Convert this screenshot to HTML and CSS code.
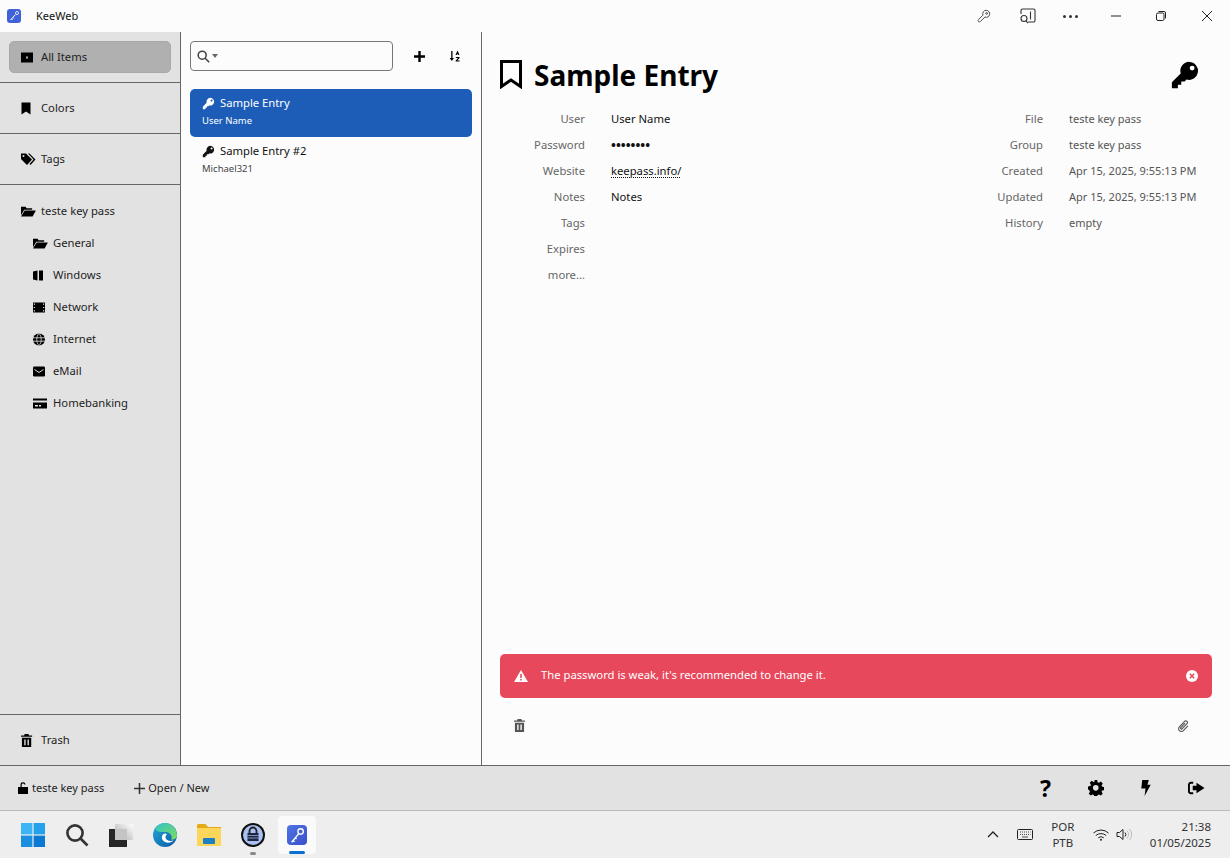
FILE: index.html
```html
<!DOCTYPE html>
<html lang="en">
<head>
    <meta charset="UTF-8">
    <meta name="viewport" content="width=device-width, initial-scale=1.0">
    <title>KeeWeb</title>
    <link rel="stylesheet" href="styles.css">
</head>
<body>
    <svg class="defs" aria-hidden="true">
        <symbol id="i-key" viewBox="0 0 16 16"><path fill-rule="evenodd" d="M10.3 1a4.8 4.8 0 0 0-4.6 6.2L1 11.900V15h3.200v-1.800H6v-1.800h1.800l1-1a4.800 4.800 0 1 0 1.500-9.400zM11.800 3a1.300 1.300 0 1 1 0 2.600 1.300 1.300 0 0 1 0-2.600z"/></symbol>
        <symbol id="i-folder" viewBox="0 0 16 14" preserveAspectRatio="xMinYMid meet"><path d="M0 2h5l1 1.500h6V5H3.500L0 11zM4 6h12l-3.500 6.500H0z"/></symbol>
        <symbol id="i-trash" viewBox="0 0 12 14" preserveAspectRatio="xMinYMid meet"><path fill-rule="evenodd" d="M4 0h4l.7 1.500H12V3H0V1.500h3.300zM1 4h10v10H1zm2.500 2v6h1.500V6zm3.500 0v6h1.500V6z"/></symbol>
        <linearGradient id="g-task" x1="1" y1="0" x2="0" y2="1"><stop offset="0" stop-color="#ffffff"/><stop offset="1" stop-color="#a8a8a8"/></linearGradient>
        <linearGradient id="g-edge" x1="0" y1="0" x2="1" y2="1"><stop offset="0" stop-color="#1fa8d8"/><stop offset="1" stop-color="#0c59a4"/></linearGradient>
        <linearGradient id="g-edge2" x1="0" y1="0" x2="1" y2="1"><stop offset="0" stop-color="#2ec4c8"/><stop offset="1" stop-color="#7fdc5c"/></linearGradient>
    </svg>

    <div class="titlebar">
        <div class="app-icon"><svg width="12" height="12" viewBox="0 0 12 12"><path d="M9 1.500a1.500 1.500 0 1 0 .1 0zM7.500 4.500 2.500 10M3.500 9l1 1M5 7.500l1 1" fill="none" stroke="#fff" stroke-width="1"/></svg></div>
        <span class="app-name">KeeWeb</span>
        <div class="win-tools">
            <svg class="w-icon w-key" viewBox="0 0 16 16" fill="none" stroke="#333" stroke-width="1"><path d="M10.500 1.500a4 4 0 0 0-3.700 5.500L1.700 12.100a1.500 1.500 0 0 0 2.200 2.200L9 9.200a4 4 0 1 0 1.500-7.700z"/><circle cx="11" cy="5" r="1"/></svg>
            <svg class="w-icon w-find" viewBox="0 0 16 16" fill="none" stroke="#333" stroke-width="1.100"><path d="M1 6V2.500A1.500 1.500 0 0 1 2.500 1h11A1.500 1.500 0 0 1 15 2.500v10a1.500 1.500 0 0 1-1.500 1.500H8M10.500 3.500v8"/><circle cx="4" cy="10.500" r="3"/><path d="m6 13 2 2.200"/></svg>
            <div class="w-dots"><i></i><i></i><i></i></div>
            <svg class="w-icon w-min" viewBox="0 0 10 10" stroke="#222"><path d="M0 5h10"/></svg>
            <svg class="w-icon w-max" viewBox="0 0 10 10" fill="none" stroke="#222"><rect x=".5" y="2" width="7.500" height="7.500" rx="1.500"/><path d="M2.500 .5H8a1.500 1.500 0 0 1 1.500 1.500v5.500"/></svg>
            <svg class="w-icon w-close" viewBox="0 0 10 10" stroke="#222"><path d="m0 0 10 10M10 0 0 10"/></svg>
        </div>
    </div>

    <div class="app">
        <div class="menu">
            <div class="menu-section">
                <div class="menu-item active">
                    <svg class="menu-icon" viewBox="0 -1.500 15 13"><path fill-rule="evenodd" d="M0 0h12v10H0zm5 4v2h2V4z"/></svg>
                    <span>All Items</span>
                </div>
            </div>
            <div class="menu-section">
                <div class="menu-item">
                    <svg class="menu-icon" viewBox="1 -.5 15 13"><path d="M1.500 0h9v12L6 9l-4.500 3z"/></svg>
                    <span>Colors</span>
                </div>
            </div>
            <div class="menu-section">
                <div class="menu-item">
                    <svg class="menu-icon" viewBox="0 -.5 15 13"><path fill-rule="evenodd" d="M0 0h5l6 6-5 5.500L0 5.500zm2.500 1.500a1 1 0 1 0 0 2 1 1 0 0 0 0-2z"/><path d="M7 0h1.500l6 6-5 5.500-1-1 4-4.500z"/></svg>
                    <span>Tags</span>
                </div>
            </div>
            <div class="menu-groups">
                <div class="menu-item">
                    <svg class="menu-icon"><use href="#i-folder"/></svg>
                    <span>teste key pass</span>
                </div>
                <div class="menu-item sub">
                    <svg class="menu-icon"><use href="#i-folder"/></svg>
                    <span>General</span>
                </div>
                <div class="menu-item sub">
                    <svg class="menu-icon" viewBox="0 -1.500 15 13"><path d="M0 1l4.500-1v10L0 9zM6 0l4 0v10H6z"/></svg>
                    <span>Windows</span>
                </div>
                <div class="menu-item sub">
                    <svg class="menu-icon" viewBox="0 -1.500 15 13"><path fill-rule="evenodd" d="M0 0h12v10H0zm.800 1v1.200H2V1zm9.200 0v1.200h1.200V1zM.800 4.400v1.200H2V4.400zm9.200 0v1.200h1.200V4.400zM.800 7.800V9H2V7.800zm9.200 0V9h1.200V7.800z"/></svg>
                    <span>Network</span>
                </div>
                <div class="menu-item sub">
                    <svg class="menu-icon" viewBox="0 -.5 15 13"><circle cx="6" cy="6" r="6"/><path d="M0 4.300h12M0 7.700h12M6 0c-3 3-3 9 0 12M6 0c3 3 3 9 0 12" fill="none" stroke="#e2e2e2" stroke-width=".8"/></svg>
                    <span>Internet</span>
                </div>
                <div class="menu-item sub">
                    <svg class="menu-icon" viewBox="0 -1.500 15 13"><rect width="12" height="10" rx="1.200"/><path d="m1.500 3 4.500 3 4.500-3" fill="none" stroke="#e2e2e2"/></svg>
                    <span>eMail</span>
                </div>
                <div class="menu-item sub">
                    <svg class="menu-icon" viewBox="0 -1.500 15 13"><path fill-rule="evenodd" d="M0 0h14v2H0zM0 4h14v6H0zm2 2.500v1.500h3V6.500zm4 0v1.500h2V6.500z"/></svg>
                    <span>Homebanking</span>
                </div>
            </div>
            <div class="menu-section trash">
                <div class="menu-item">
                    <svg class="menu-icon"><use href="#i-trash"/></svg>
                    <span>Trash</span>
                </div>
            </div>
        </div>

        <div class="list">
            <div class="list-head">
                <div class="search">
                    <svg class="search-icon" viewBox="0 0 13 13" fill="none" stroke="#444" stroke-width="1.600"><circle cx="5.200" cy="5.200" r="4"/><path d="m8.200 8.200 4 4"/></svg>
                    <span class="caret"></span>
                </div>
                <svg class="head-btn plus" viewBox="0 0 11 11"><path d="M4.300 0h2.400v4.300H11v2.400H6.700V11H4.300V6.700H0V4.300h4.300z"/></svg>
                <svg class="head-btn sort" viewBox="0 0 12 12"><path d="M2.200 1h1.300v7H5L2.800 11 .6 8h1.600zM8.500 .5l2 4.500H9.300L9 4.200H8L7.700 5H6.500zM6.800 7h3.800v1L8.300 10.400h2.300v1.100H6.700v-1L9 8H6.800z"/></svg>
            </div>
            <div class="entry selected">
                <div class="entry-title"><svg class="entry-icon"><use href="#i-key"/></svg><span>Sample Entry</span></div>
                <div class="entry-sub">User Name</div>
            </div>
            <div class="entry">
                <div class="entry-title"><svg class="entry-icon"><use href="#i-key"/></svg><span>Sample Entry #2</span></div>
                <div class="entry-sub">Michael321</div>
            </div>
        </div>

        <div class="details">
            <div class="details-head">
                <svg class="bookmark" viewBox="0 0 22 29" fill="none" stroke="#000" stroke-width="3"><path d="M1.500 1.500h19v25L11 20l-9.500 6.500z"/></svg>
                <h1>Sample Entry</h1>
                <svg class="big-key"><use href="#i-key"/></svg>
            </div>
            <div class="fields">
                <div class="field-col">
                    <div class="label">User</div><div class="value">User Name</div>
                    <div class="label">Password</div><div class="value dots">&bull;&bull;&bull;&bull;&bull;&bull;&bull;&bull;</div>
                    <div class="label">Website</div><div class="value"><span class="link">keepass.info/</span></div>
                    <div class="label">Notes</div><div class="value">Notes</div>
                    <div class="label">Tags</div><div class="value"></div>
                    <div class="label">Expires</div><div class="value"></div>
                    <div class="label">more...</div><div class="value"></div>
                </div>
                <div class="field-col aside">
                    <div class="label">File</div><div class="value muted">teste key pass</div>
                    <div class="label">Group</div><div class="value muted">teste key pass</div>
                    <div class="label">Created</div><div class="value muted">Apr 15, 2025, 9:55:13 PM</div>
                    <div class="label">Updated</div><div class="value muted">Apr 15, 2025, 9:55:13 PM</div>
                    <div class="label">History</div><div class="value muted">empty</div>
                </div>
            </div>
            <div class="alert">
                <svg class="alert-icon" viewBox="0 0 14 12"><path fill-rule="evenodd" d="M7 0l7 12H0zM6.200 4v4h1.600V4zm0 5v1.500h1.600V9z"/></svg>
                <span class="alert-text">The password is weak, it's recommended to change it.</span>
                <svg class="alert-close" viewBox="0 0 12 12"><circle cx="6" cy="6" r="6" fill="#fff"/><path d="m3.800 3.800 4.400 4.400M8.200 3.800 3.800 8.200" stroke="#e8485c" stroke-width="1.500"/></svg>
            </div>
            <div class="details-foot">
                <svg class="foot-icon"><use href="#i-trash"/></svg>
                <svg class="foot-icon clip" viewBox="0 0 12 14" fill="none" stroke="#555" stroke-width="1.200"><path d="M3.500 11.500 9.800 5a1.800 1.800 0 0 0-2.600-2.500L1.500 8.400a3 3 0 0 0 4.300 4.200l5-5.200M7.700 4.300 3 9.200a.8.800 0 0 0 1.200 1.200"/></svg>
            </div>
        </div>
    </div>

    <div class="footer">
        <div class="foot-item">
            <svg class="lock" viewBox="0 0 10 12"><path d="M2.500 5V3a2.500 2.500 0 0 1 5-.5H6.300A1.300 1.300 0 0 0 3.700 3v2H10v7H0V5z"/></svg>
            <span>teste key pass</span>
        </div>
        <div class="foot-item open">
            <svg class="small-plus" viewBox="0 0 10 10"><path d="M4.300 0h1.400v4.300H10v1.400H5.700V10H4.300V5.700H0V4.300h4.300z"/></svg>
            <span>Open / New</span>
        </div>
        <div class="foot-actions">
            <span class="help">?</span>
            <svg class="foot-btn" viewBox="0 0 16 16"><path fill-rule="evenodd" d="m6.500 0h3l.4 2.200 1.400.6 1.900-1.200 2 2.100-1.200 1.900.6 1.400 2.400.4v3l-2.400.4-.6 1.400 1.200 1.900-2 2-1.900-1.200-1.400.6-.4 2.300h-3l-.4-2.300-1.400-.6-1.900 1.200-2-2 1.200-1.900-.6-1.400L0 9.600v-3l2.400-.4.600-1.400-1.200-1.900 2-2.100L5.700 2l1.400-.6zM8 5.200a2.900 2.900 0 1 0 0 5.800 2.900 2.900 0 0 0 0-5.800z" transform="scale(.97)"/></svg>
            <svg class="foot-btn" viewBox="0 0 12 17"><path d="M2 0h7L7.500 5H11L4.500 17l1-8H1z"/></svg>
            <svg class="foot-btn wide" viewBox="0 0 18 14"><path d="M9 1.500 17.500 7 9 12.500V9.500H5v-5h4z"/><path d="M5.500 1.500H3A2 2 0 0 0 1 3.500v7a2 2 0 0 0 2 2h2.500" fill="none" stroke="#000" stroke-width="2"/></svg>
        </div>
    </div>

    <div class="taskbar">
        <div class="task-icons">
            <div class="task"><svg viewBox="0 0 24 24" width="24" height="24"><rect width="11.400" height="11.400" fill="#3db5f5"/><rect x="12.600" width="11.400" height="11.400" fill="#25a0ea"/><rect y="12.600" width="11.400" height="11.400" fill="#1a8fe0"/><rect x="12.600" y="12.600" width="11.400" height="11.400" fill="#0b78d4"/></svg></div>
            <div class="task"><svg viewBox="0 0 24 24" width="24" height="24" fill="none" stroke="#333" stroke-width="2.600"><circle cx="10" cy="10" r="7.600"/><path d="m15.500 15.500 7 7"/></svg></div>
            <div class="task"><svg viewBox="0 0 24 24" width="24" height="24"><rect x="6" y="1" width="18" height="16" fill="url(#g-task)"/><rect y="6" width="18" height="18" fill="#262626"/><rect x="6" y="6" width="12" height="11" fill="#c4c4c4"/></svg></div>
            <div class="task"><svg viewBox="0 0 24 24" width="24" height="24"><circle cx="12" cy="12" r="12" fill="url(#g-edge)"/><path d="M2 5.500A12 12 0 0 1 24 12c0 3.500-3 5-6 4.500 2-3-.5-7.500-5.500-7.500-4 0-8.500.5-10.500-3.500z" fill="url(#g-edge2)"/><path d="M12.500 10.500c-4.500 0-5 6.500-.5 8.500 3 1.300 6.500.5 8.500-1.500-4 1.200-7.500-.2-8-2.800-.2-1.500.5-3 1.500-3.500-.5-.5-1-.7-1.500-.7z" fill="#fff"/></svg></div>
            <div class="task"><svg viewBox="0 0 24 22" width="24" height="22"><path d="M0 1.500A1.500 1.500 0 0 1 1.500 0h7L11 3h13v19H0z" fill="#e6a917"/><rect y="4" width="24" height="18" fill="#fcd55b"/><rect x="6" y="14" width="12" height="6" rx="1" fill="#1b7fc4"/></svg></div>
            <div class="task running"><svg viewBox="0 0 24 24" width="24" height="24"><circle cx="12" cy="12" r="11" fill="#a9c0f0" stroke="#111" stroke-width="2"/><path d="M8.500 10V8a3.500 3.500 0 0 1 7 0v2" fill="none" stroke="#222" stroke-width="1.800"/><rect x="6.500" y="10" width="11" height="8" fill="#1c2640"/><path d="M6.500 12.500h11M6.500 15h11" stroke="#a9c0f0" stroke-width=".7"/></svg></div>
            <div class="task current"><div class="kw-icon"><svg viewBox="0 0 20 20" width="18" height="18" fill="none" stroke="#fff" stroke-width="1.500"><circle cx="14" cy="6" r="3"/><path d="M12 8.500 4 18M5.500 16l1.800 1.500M8 13l1.500 1.300"/></svg></div></div>
        </div>
        <div class="tray">
            <svg class="chevron" viewBox="0 0 12 7" fill="none" stroke="#222" stroke-width="1.300"><path d="m1 6 5-5 5 5"/></svg>
            <svg class="keyboard" viewBox="0 0 16 11" fill="none" stroke="#222"><rect x=".5" y=".5" width="15" height="10" rx="1"/><path d="M3 3h1M5 3h1M7 3h1M9 3h1M11 3h1M13 3h.5M3 5.500h1M5 5.500h1M7 5.500h1M9 5.500h1M11 5.500h1M13 5.500h.5M5 8h6" stroke-width=".8"/></svg>
            <div class="lang"><span>POR</span><span>PTB</span></div>
            <svg class="wifi" viewBox="0 0 16 12" fill="none" stroke="#222"><path d="M.5 4a11 11 0 0 1 15 0M2.800 6.500a8 8 0 0 1 10.400 0M5.200 8.800a4.500 4.500 0 0 1 5.600 0"/><circle cx="8" cy="10.800" r="1" fill="#222" stroke="none"/></svg>
            <svg class="speaker" viewBox="0 0 17 13" fill="none" stroke="#222"><path d="M1 4.500h2.500L7 1.500v10l-3.500-3H1zM9 4.500a3 3 0 0 1 0 4"/><path d="M11 2.500a6 6 0 0 1 0 8M13.500 1a8 8 0 0 1 0 11" stroke="#bbb"/></svg>
            <div class="clock"><span>21:38</span><span>01/05/2025</span></div>
        </div>
    </div>
</body>
</html>
```

FILE: styles.css
```css
/* General */
* {
    box-sizing: border-box;
}

body {
    margin: 0;
    height: 858px;
    overflow: hidden;
    display: flex;
    flex-direction: column;
    font-family: 'Noto Sans', sans-serif;
    font-size: 11.25px;
    color: #111;
    background-color: #fcfcfc;
}

.defs {
    position: absolute;
    width: 0;
    height: 0;
}

svg {
    display: block;
    flex: none;
}

/* Title bar */
.titlebar {
    height: 32px;
    flex: none;
    display: flex;
    align-items: center;
    padding-left: 7px;
}

.app-icon {
    width: 14px;
    height: 14px;
    margin-bottom: 1px;
    border-radius: 3px;
    background-color: #3f62d8;
    display: flex;
    align-items: center;
    justify-content: center;
}

.app-name {
    margin-left: 15px;
    margin-bottom: 1px;
    font-size: 11px;
}

.win-tools {
    margin-left: auto;
    display: flex;
    align-items: center;
    height: 32px;
    padding-right: 18px;
}

.w-key {
    width: 14px;
    height: 14px;
    margin-right: 29px;
}

.w-find {
    width: 16px;
    height: 16px;
    margin-right: 27px;
}

.w-dots {
    display: flex;
    gap: 3px;
    margin-right: 33px;
}

.w-dots i {
    width: 3px;
    height: 3px;
    border-radius: 50%;
    background-color: #333;
}

.w-min {
    width: 10px;
    height: 10px;
    margin-right: 35px;
}

.w-max {
    width: 10px;
    height: 10px;
    margin-right: 36px;
}

.w-close {
    width: 10px;
    height: 10px;
}

/* Main columns */
.app {
    height: 733px;
    flex: none;
    display: flex;
}

.menu {
    width: 181px;
    flex: none;
    display: flex;
    flex-direction: column;
    background-color: #e2e2e2;
    border-right: 1px solid #666;
}

.menu-section {
    height: 51px;
    padding: 9px;
    border-bottom: 1px solid #666;
}

.menu-section .menu-item {
    height: 32px;
}

.menu-groups {
    flex: 1;
    padding-top: 10px;
}

.menu-groups .menu-item {
    height: 32px;
    padding-left: 21px;
}

.menu-groups .sub {
    padding-left: 33px;
}

.menu-section.trash {
    border-bottom: none;
    border-top: 1px solid #666;
}

.menu-item {
    display: flex;
    align-items: center;
    padding-left: 12px;
    border-radius: 5px;
    color: #222;
}

.menu-item span {
    margin-bottom: 2px;
}

.menu-item.active {
    background-color: #b0b0b0;
    border: 1px solid #a8a8a8;
    padding-left: 11px;
}

.menu-icon {
    width: 15px;
    height: 13px;
    margin-right: 5px;
}

/* Entry list */
.list {
    width: 301px;
    flex: none;
    padding: 9px 9px 0;
    border-right: 1px solid #666;
}

.list-head {
    height: 30px;
    display: flex;
    align-items: center;
    margin-bottom: 18px;
}

.search {
    width: 203px;
    height: 30px;
    display: flex;
    align-items: center;
    padding-left: 6px;
    border: 1px solid #777;
    border-radius: 4px;
}

.search-icon {
    width: 13px;
    height: 13px;
}

.caret {
    margin-left: 2px;
    border: 3.5px solid transparent;
    border-top: 4px solid #666;
    border-bottom: none;
}

.head-btn {
    width: 11px;
    height: 11px;
}

.plus {
    margin-left: 21px;
}

.sort {
    width: 12px;
    height: 12px;
    margin-left: 24px;
}

.entry {
    height: 48px;
    padding: 6px 12px;
    border-radius: 5px;
    color: #111;
}

.entry.selected {
    background-color: #1d5db8;
    color: #fff;
}

.entry-title {
    display: flex;
    align-items: center;
    height: 16px;
}

.entry-title span {
    margin-bottom: 2px;
}

.entry-icon {
    width: 13px;
    height: 13px;
    margin-right: 5px;
    fill: currentColor;
}

.entry-sub {
    margin-top: 3px;
    font-size: 9.5px;
    line-height: 13px;
    color: #444;
}

.selected .entry-sub {
    color: #fff;
}

/* Details */
.details {
    flex: 1;
    display: flex;
    flex-direction: column;
    padding: 0 18px;
}

.details-head {
    height: 75px;
    display: flex;
    align-items: center;
    padding-top: 10px;
}

.bookmark {
    width: 22px;
    height: 29px;
}

h1 {
    margin: 0 0 0 12px;
    font-size: 28px;
    font-weight: 700;
    color: #000;
}

.big-key {
    width: 30px;
    height: 30px;
    margin-left: auto;
    margin-right: 12px;
}

.fields {
    flex: 1;
    display: flex;
    justify-content: space-between;
}

.field-col {
    display: grid;
    grid-template-columns: 85px 1fr;
    grid-auto-rows: 26px;
    column-gap: 26px;
    align-content: start;
    line-height: 24px;
}

.aside {
    grid-template-columns: 85px 143px;
    width: 254px;
}

.label {
    text-align: right;
    color: #666;
}

.value {
    color: #111;
    white-space: nowrap;
}

.value.muted {
    font-size: 11px;
    color: #555;
}

.dots {
    font-weight: 700;
    font-size: 13px;
}

.link {
    text-decoration: underline dotted #111;
    text-underline-offset: 2px;
}

.alert {
    height: 44px;
    display: flex;
    align-items: center;
    padding: 0 14px;
    border-radius: 5px;
    background-color: #e8485c;
    color: #fff;
}

.alert-icon {
    width: 14px;
    height: 12px;
    fill: #fff;
}

.alert-text {
    margin-left: 13px;
    margin-bottom: 3px;
}

.alert-close {
    width: 12px;
    height: 12px;
    margin-left: auto;
}

.details-foot {
    height: 67px;
    display: flex;
    align-items: flex-start;
    justify-content: space-between;
    padding: 21px 23px 0 14px;
}

.foot-icon {
    width: 11px;
    height: 13px;
    fill: #555;
}

.clip {
    fill: none;
}

/* Footer */
.footer {
    height: 46px;
    flex: none;
    display: flex;
    align-items: center;
    padding-left: 18px;
    background-color: #e2e2e2;
    border-top: 1px solid #666;
    border-bottom: 1px solid #bbb;
}

.foot-item {
    display: flex;
    align-items: center;
    font-size: 11px;
    color: #222;
}

.foot-item span {
    margin-bottom: 2px;
}

.lock {
    width: 10px;
    height: 12px;
    margin-right: 4px;
}

.open {
    margin-left: 30px;
}

.small-plus {
    width: 11px;
    height: 11px;
    margin-right: 3px;
    fill: #333;
}

.foot-actions {
    margin-left: auto;
    display: flex;
    align-items: center;
    padding-right: 25px;
}

.help {
    width: 13px;
    font-size: 23px;
    font-weight: 700;
    line-height: 20px;
    color: #000;
    margin-right: 35px;
}

.foot-btn {
    width: 16px;
    height: 16px;
    margin-right: 34px;
}

.foot-btn.wide {
    width: 17px;
    height: 14px;
    margin-right: 0;
}

/* Taskbar */
.taskbar {
    flex: 1;
    display: flex;
    align-items: center;
    background-color: #eeeeee;
}

.task-icons {
    display: flex;
    align-items: center;
    gap: 6px;
    padding-left: 14px;
}

.task {
    position: relative;
    width: 38px;
    height: 38px;
    display: flex;
    align-items: center;
    justify-content: center;
    border-radius: 4px;
}

.task.running::after {
    content: "";
    position: absolute;
    left: 16px;
    bottom: -1px;
    width: 6px;
    height: 3px;
    border-radius: 2px;
    background-color: #888;
}

.task.current {
    background-color: #fafafa;
}

.task.current::after {
    content: "";
    position: absolute;
    left: 11px;
    bottom: 0;
    width: 16px;
    height: 3px;
    border-radius: 2px;
    background-color: #0a6fcf;
}

.kw-icon {
    width: 20px;
    height: 20px;
    border-radius: 4px;
    background-image: linear-gradient(135deg, #4f74e4, #3a4fc8);
    display: flex;
    align-items: center;
    justify-content: center;
}

.tray {
    margin-left: auto;
    display: flex;
    align-items: center;
    padding-right: 19px;
    color: #333;
}

.chevron {
    width: 12px;
    height: 7px;
    margin-right: 18px;
}

.keyboard {
    width: 16px;
    height: 11px;
    margin-right: 18px;
}

.lang {
    display: flex;
    flex-direction: column;
    align-items: center;
    width: 24px;
    font-size: 11.5px;
    line-height: 16px;
    margin-right: 18px;
}

.wifi {
    width: 16px;
    height: 12px;
    margin-right: 7px;
}

.speaker {
    width: 17px;
    height: 13px;
    margin-right: 17px;
}

.clock {
    display: flex;
    flex-direction: column;
    align-items: flex-end;
    font-size: 11.5px;
    line-height: 16px;
}
```
